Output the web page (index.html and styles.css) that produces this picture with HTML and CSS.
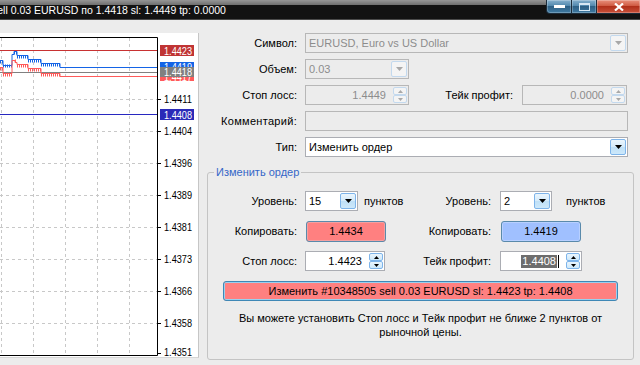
FILE: index.html
```html
<!DOCTYPE html>
<html lang="ru">
<head>
<meta charset="utf-8">
<link rel="stylesheet" href="styles.css">
</head>
<body>
<div class="titlebar">
  <span class="title">sell 0.03 EURUSD по 1.4418 sl: 1.4449 tp: 0.0000</span>
  <div class="winbtns">
    <span class="wb min"><svg width="11" height="3" viewBox="0 0 11 3"><rect x="0" y="0" width="11" height="3" fill="#fff"/></svg></span>
    <span class="wb max"><svg width="11" height="8" viewBox="0 0 11 8"><rect x="0.5" y="0.5" width="10" height="7" fill="none" stroke="#d8e8f4"/><rect x="0" y="0" width="11" height="2" fill="#d8e8f4"/></svg></span>
    <span class="wb close"><svg width="10" height="8" viewBox="0 0 10 8"><path d="M1 0.5 L9 7.5 M9 0.5 L1 7.5" stroke="#fff" stroke-width="2.2"/></svg></span>
  </div>
</div>
<div class="main">
  <div class="chart">
    <svg width="198" height="324" viewBox="0 33 198 324" font-family="Liberation Sans, Arial, sans-serif" font-size="11">
      <rect x="0" y="33" width="198" height="324" fill="#fff"/>
      <g stroke="#c8c8c8" stroke-dasharray="3 3">
        <path d="M1.5 38 V355 M33.5 38 V355 M65.5 38 V355 M97.5 38 V355 M129.5 38 V355"/>
        <path d="M0 99.5 H157 M0 131.5 H157 M0 163.5 H157 M0 195.5 H157 M0 227.5 H157 M0 259.5 H157 M0 291.5 H157 M0 323.5 H157"/>
      </g>
      <path d="M0 37.5 H157.5 V355.5 H0" fill="none" stroke="#000"/>
      <path d="M157 99.5 H161 M157 131.5 H161 M157 163.5 H161 M157 195.5 H161 M157 227.5 H161 M157 259.5 H161 M157 291.5 H161 M157 323.5 H161 M157 353.5 H161" stroke="#000"/>
      <path d="M0 50.5 H157" stroke="#c83232"/>
      <path d="M0 72.5 H157" stroke="#808080"/>
      <path d="M0 114.5 H157" stroke="#2828c0"/>
      <path d="M0 60.5 H3 V65.5 H12 V54.5 H14 V51.5 H17 V55.5 H28 V59.5 H41 V63.5 H60 V67.5 H157" fill="none" stroke="#1464e6"/>
      <path d="M0 62 H3 M3 66 H12 M14 53 H17 M17 57 H28 M28 61 H41 M41 65 H60" stroke="#1464e6" stroke-width="3" stroke-dasharray="1 1"/>
      <path d="M0 67.5 H3 V73.5 H12 V60.5 H15 V62.5 H17 V64.5 H28 V68.5 H41 V73.5 H60 V76.5 H157" fill="none" stroke="#ff5a5a"/>
      <path d="M0 69 H3 M3 75 H12 M15 61 H17 M17 66 H28 M28 70 H41 M41 75 H60" stroke="#ff5a5a" stroke-width="3" stroke-dasharray="1 1"/>
      <g fill="#000">
        <text x="164" y="103" textLength="28" lengthAdjust="spacingAndGlyphs">1.4411</text>
        <text x="164" y="135" textLength="28" lengthAdjust="spacingAndGlyphs">1.4404</text>
        <text x="164" y="167" textLength="28" lengthAdjust="spacingAndGlyphs">1.4396</text>
        <text x="164" y="199" textLength="28" lengthAdjust="spacingAndGlyphs">1.4389</text>
        <text x="164" y="231" textLength="28" lengthAdjust="spacingAndGlyphs">1.4381</text>
        <text x="164" y="263" textLength="28" lengthAdjust="spacingAndGlyphs">1.4373</text>
        <text x="164" y="295" textLength="28" lengthAdjust="spacingAndGlyphs">1.4366</text>
        <text x="164" y="327" textLength="28" lengthAdjust="spacingAndGlyphs">1.4358</text>
        <text x="164" y="356" textLength="28" lengthAdjust="spacingAndGlyphs">1.4351</text>
      </g>
      <rect x="160" y="45" width="34" height="11" fill="#c03434"/>
      <text x="164" y="54.5" fill="#fff" textLength="28" lengthAdjust="spacingAndGlyphs">1.4423</text>
      <rect x="160" y="62" width="34" height="10" fill="#1464e6"/>
      <text x="164" y="71" fill="#fff" textLength="28" lengthAdjust="spacingAndGlyphs">1.4419</text>
      <rect x="160" y="72" width="34" height="9" fill="#ff5a5a"/>
      <text x="164" y="81" fill="#fff" textLength="28" lengthAdjust="spacingAndGlyphs">1.4417</text>
      <rect x="160" y="67" width="34" height="10" fill="#808080"/>
      <text x="164" y="76" fill="#fff" textLength="28" lengthAdjust="spacingAndGlyphs">1.4418</text>
      <rect x="160" y="109" width="34" height="11" fill="#2a2ab8"/>
      <text x="164" y="118.5" fill="#fff" textLength="28" lengthAdjust="spacingAndGlyphs">1.4408</text>
    </svg>
  </div>
  <div class="panel">
    <div class="row">
      <span class="lbl">Символ:</span>
      <div class="box dis w-full"><span class="val">EURUSD, Euro vs US Dollar</span><span class="dd dd-dis"><svg width="7" height="4" viewBox="0 0 7 4"><path d="M0 0 H7 L3.5 4Z" fill="#a8a8a8"/></svg></span></div>
    </div>
    <div class="row">
      <span class="lbl">Объем:</span>
      <div class="box dis w-104"><span class="val">0.03</span><span class="dd dd-dis"><svg width="7" height="4" viewBox="0 0 7 4"><path d="M0 0 H7 L3.5 4Z" fill="#a8a8a8"/></svg></span></div>
    </div>
    <div class="row">
      <span class="lbl">Стоп лосс:</span>
      <div class="box dis w-104"><span class="num">1.4449</span><span class="spin spin-dis"><span class="sb"><svg width="5" height="3" viewBox="0 0 5 3"><path d="M0 3 H5 L2.5 0Z" fill="#a8a8a8"/></svg></span><span class="sb"><svg width="5" height="3" viewBox="0 0 5 3"><path d="M0 0 H5 L2.5 3Z" fill="#a8a8a8"/></svg></span></span></div>
      <span class="lbl2">Тейк профит:</span>
      <div class="box dis w-105"><span class="num">0.0000</span><span class="spin spin-dis"><span class="sb"><svg width="5" height="3" viewBox="0 0 5 3"><path d="M0 3 H5 L2.5 0Z" fill="#a8a8a8"/></svg></span><span class="sb"><svg width="5" height="3" viewBox="0 0 5 3"><path d="M0 0 H5 L2.5 3Z" fill="#a8a8a8"/></svg></span></span></div>
    </div>
    <div class="row">
      <span class="lbl wide">Комментарий:</span>
      <div class="box dis w-full"></div>
    </div>
    <div class="row last">
      <span class="lbl">Тип:</span>
      <div class="box w-full"><span class="val">Изменить ордер</span><span class="dd"><svg width="7" height="4" viewBox="0 0 7 4"><path d="M0 0 H7 L3.5 4Z" fill="#000"/></svg></span></div>
    </div>
    <fieldset class="group">
      <legend>Изменить ордер</legend>
      <div class="grow">
        <span class="glbl">Уровень:</span>
        <div class="gctl"><div class="box w-53"><span class="val">15</span><span class="dd"><svg width="7" height="4" viewBox="0 0 7 4"><path d="M0 0 H7 L3.5 4Z" fill="#000"/></svg></span></div><span class="pts">пунктов</span></div>
        <span class="glbl2">Уровень:</span>
        <div class="gctl"><div class="box w-52"><span class="val">2</span><span class="dd"><svg width="7" height="4" viewBox="0 0 7 4"><path d="M0 0 H7 L3.5 4Z" fill="#000"/></svg></span></div><span class="pts pts2">пунктов</span></div>
      </div>
      <div class="grow">
        <span class="glbl">Копировать:</span>
        <div class="gctl"><span class="btn red w-80">1.4434</span></div>
        <span class="glbl2">Копировать:</span>
        <div class="gctl"><span class="btn blue w-80">1.4419</span></div>
      </div>
      <div class="grow">
        <span class="glbl">Стоп лосс:</span>
        <div class="gctl"><div class="box w-80"><span class="num">1.4423</span><span class="spin"><span class="sb"><svg width="5" height="3" viewBox="0 0 5 3"><path d="M0 3 H5 L2.5 0Z" fill="#000"/></svg></span><span class="sb"><svg width="5" height="3" viewBox="0 0 5 3"><path d="M0 0 H5 L2.5 3Z" fill="#000"/></svg></span></span></div></div>
        <span class="glbl2">Тейк профит:</span>
        <div class="gctl"><div class="box w-82"><span class="num"><span class="sel">1.4408</span><span class="caret"></span></span><span class="spin"><span class="sb"><svg width="5" height="3" viewBox="0 0 5 3"><path d="M0 3 H5 L2.5 0Z" fill="#000"/></svg></span><span class="sb"><svg width="5" height="3" viewBox="0 0 5 3"><path d="M0 0 H5 L2.5 3Z" fill="#000"/></svg></span></span></div></div>
      </div>
      <div class="bigbtn">Изменить #10348505 sell 0.03 EURUSD sl: 1.4423 tp: 1.4408</div>
      <p class="note">Вы можете установить Стоп лосс и Тейк профит не ближе 2 пунктов от<br>рыночной цены.</p>
    </fieldset>
  </div>
</div>
</body>
</html>
```

FILE: styles.css
```css
* { box-sizing: border-box; }
html, body { margin: 0; padding: 0; }
body {
  width: 640px;
  height: 365px;
  overflow: hidden;
  background: #ececec;
  font-family: "Liberation Sans", Arial, sans-serif;
  font-size: 11px;
  color: #000;
}
.titlebar {
  height: 20px;
  display: flex;
  justify-content: space-between;
  overflow: hidden;
  background: linear-gradient(#969696 0, #6e6e6e 5px, #121212 5px, #121212 19px, #4a4a4a 19px, #4a4a4a 20px);
}
.title {
  color: #fff;
  font-size: 10.5px;
  line-height: 14px;
  padding-top: 3px;
  margin-left: -8px;
  white-space: nowrap;
}
.winbtns { display: flex; height: 14px; }
.wb {
  display: flex;
  align-items: center;
  justify-content: center;
  height: 14px;
  border: 1px solid #1c2c3a;
  border-top: 0;
  box-shadow: inset 0 0 0 1px rgba(255,255,255,0.25);
}
.wb.min {
  width: 26px;
  border-radius: 0 0 0 4px;
  background: linear-gradient(#86b0cd, #5288ad 45%, #2e6085 50%, #3f7aa2);
}
.wb.max {
  width: 25px;
  border-left: 0;
  background: linear-gradient(#86b0cd, #5288ad 45%, #2e6085 50%, #3f7aa2);
}
.wb.close {
  width: 43px;
  border-left: 0;
  border-right: 0;
  background: linear-gradient(#e8907c, #cf5a42 45%, #b0301a 50%, #c8503a);
}
.main { display: flex; }
.chart {
  flex: none;
  width: 199px;
  height: 325px;
  margin-top: 13px;
  background: #fff;
  border-right: 1px solid #c6c6c6;
  border-bottom: 1px solid #d6d6d6;
}
.chart svg { display: block; }
.panel { flex: 1; padding-top: 13px; }
.row {
  display: flex;
  align-items: center;
  height: 20px;
  margin-bottom: 6px;
}
.row.last { margin-bottom: 0; }
.lbl {
  flex: none;
  width: 106px;
  padding-right: 8px;
  text-align: right;
  white-space: nowrap;
}
.lbl.wide { letter-spacing: 0.3px; }
.lbl2 {
  flex: none;
  width: 113px;
  padding-right: 9px;
  text-align: right;
  white-space: nowrap;
}
.box {
  flex: none;
  display: flex;
  align-items: center;
  height: 20px;
  border: 1px solid #abadb3;
  background: #fff;
  padding: 1px;
}
.box.dis {
  background: #ececec;
  border-color: #b7b7b7;
  color: #8c8c8c;
}
.w-full { width: 323px; }
.w-104 { width: 104px; }
.w-105 { width: 105px; }
.w-53 { width: 53px; }
.w-52 { width: 52px; }
.w-80 { width: 80px; }
.w-82 { width: 82px; }
.val { flex: 1; padding-left: 2px; white-space: nowrap; overflow: hidden; }
.num { flex: 1; padding-right: 7px; white-space: nowrap; display: flex; justify-content: flex-end; align-items: center; }
.dd {
  flex: none;
  width: 16px;
  height: 16px;
  display: flex;
  align-items: center;
  justify-content: center;
  border: 1px solid #7eb4ea;
  border-radius: 2px;
  background: linear-gradient(#eaf5fd, #d5ebfa 50%, #bfe0f7 51%, #cde8fa);
}
.dd-dis {
  border-color: #c3d9ee;
  background: #f4f4f4;
}
.dd svg, .sb svg { display: block; }
.spin {
  flex: none;
  width: 14px;
  height: 16px;
  display: flex;
  flex-direction: column;
}
.sb {
  flex: 1;
  display: flex;
  align-items: center;
  justify-content: center;
  border: 1px solid #7eb4ea;
  border-radius: 2px;
  background: linear-gradient(#eaf5fd, #cde8fa);
}
.spin-dis .sb { border-color: #c3d9ee; background: #f4f4f4; }
.sel { background: #6d6d6d; color: #fff; padding: 0 1px; line-height: 13px; }
.caret { display: inline-block; width: 1px; height: 13px; background: #000; margin-left: 1px; }
.group {
  margin: 9px 6px 0 8px;
  padding: 12px 0 0 0;
  border: 1px solid #c4c4c4;
  border-radius: 3px;
  height: 194px;
  min-width: 0;
}
.group legend {
  margin-left: 6px;
  padding: 0 2px;
  color: #3567c8;
  line-height: 13px;
}
.grow {
  display: flex;
  align-items: center;
  height: 20px;
  margin-bottom: 10px;
}
.glbl {
  flex: none;
  width: 97px;
  padding-right: 8px;
  text-align: right;
  white-space: nowrap;
}
.glbl2 {
  flex: none;
  width: 95px;
  padding-right: 9px;
  text-align: right;
  white-space: nowrap;
}
.gctl { flex: none; width: 100px; display: flex; align-items: center; white-space: nowrap; }
.pts { margin-left: 6px; }
.pts2 { margin-left: 14px; }
.btn {
  display: flex;
  align-items: center;
  justify-content: center;
  height: 21px;
  margin-left: 1px;
  border: 1px solid #5a8aab;
  border-radius: 3px;
}
.btn.red { background: #ff8080; box-shadow: inset 0 0 0 1px #f4a0a0; }
.btn.blue { background: #a0c0ff; box-shadow: inset 0 0 0 1px #b8d0ff; }
.bigbtn {
  margin: 0 15px;
  height: 20px;
  display: flex;
  align-items: center;
  justify-content: center;
  background: #ff8080;
  border: 1px solid #3f88b6;
  border-radius: 3px;
  box-shadow: inset 0 0 0 1px #9ad0ee;
  white-space: nowrap;
}
.note {
  margin: 10px 0 0;
  text-align: center;
  line-height: 14px;
}
```
